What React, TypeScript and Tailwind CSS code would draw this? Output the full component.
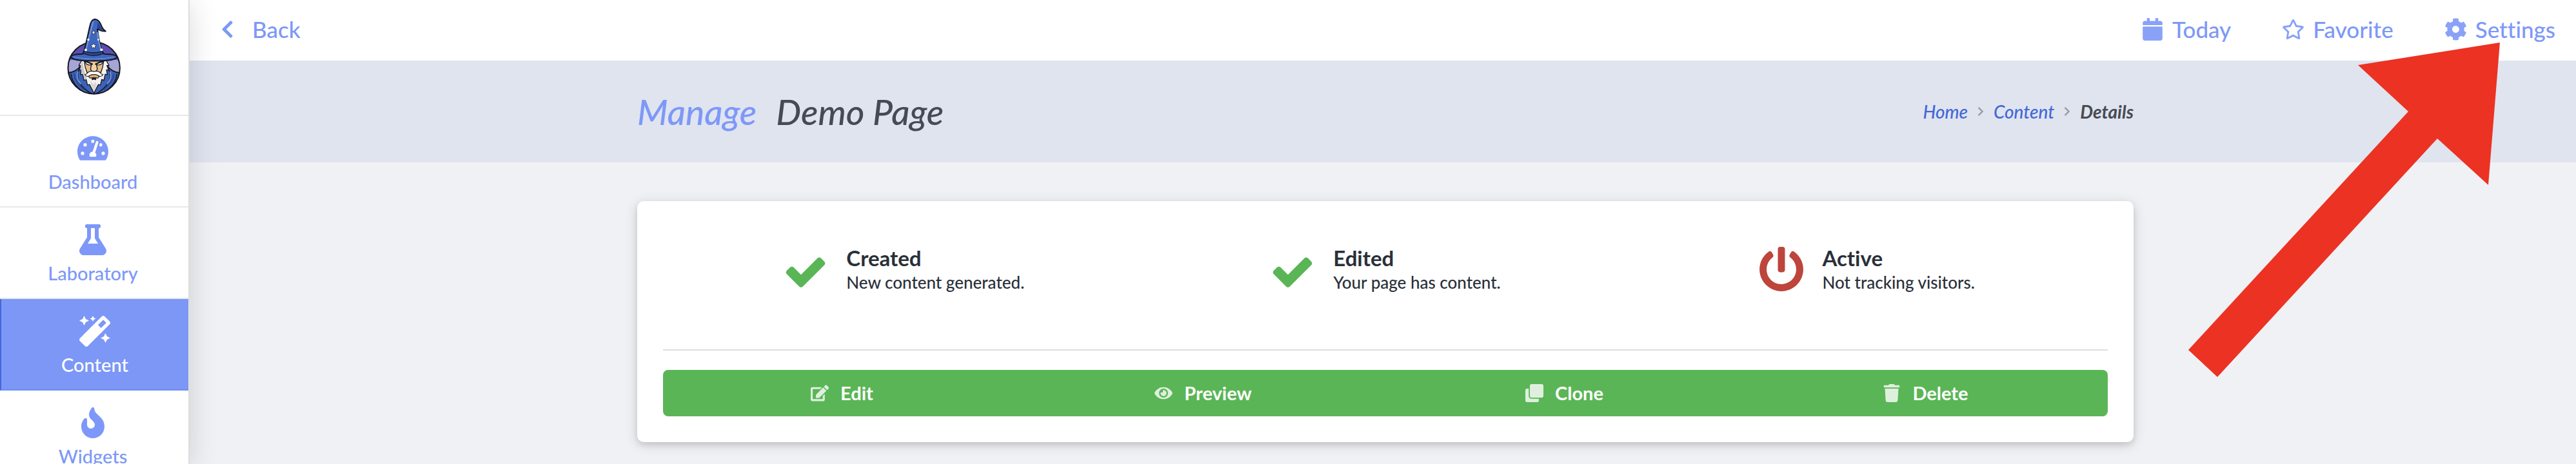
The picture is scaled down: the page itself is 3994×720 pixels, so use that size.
import type { ReactNode } from "react";
import type { IconType } from "react-icons";
import {
  FaCalendar,
  FaChevronLeft,
  FaChevronRight,
  FaClone,
  FaCog,
  FaEdit,
  FaEye,
  FaFire,
  FaFlask,
  FaMagic,
  FaPowerOff,
  FaRegStar,
  FaTachometerAlt,
  FaTrash,
} from "react-icons/fa";

function WizardLogo() {
  return (
    <svg viewBox="44 42 250 358" className="h-[120px] w-[84px]" role="img" aria-label="Wizard">
      <defs>
        <clipPath id="badge">
          <circle cx="168" cy="273" r="120" />
        </clipPath>
      </defs>
      <circle cx="168" cy="273" r="120" fill="#a5a5d6" />
      <g clipPath="url(#badge)">
        <path d="M40 140H300V236H40Z" fill="#5a4fae" />
        <path
          d="M40 296Q82 296 108 262L228 262Q254 296 296 296V400H40Z"
          fill="#3c62b8"
          stroke="#17181f"
          strokeWidth="6"
        />
        <path d="M104 274Q78 312 112 356Q136 384 164 394" fill="none" stroke="#17181f" strokeWidth="5" />
        <path d="M232 274Q258 312 224 356Q200 384 172 394" fill="none" stroke="#17181f" strokeWidth="5" />
        <path d="M94 290Q82 318 108 348M242 290Q254 318 228 348" fill="none" stroke="#7d9be0" strokeWidth="5" />
        <path d="M62 300Q66 350 122 386M274 300Q270 350 214 386" fill="none" stroke="#17181f" strokeWidth="5" />
        <path d="M76 300Q80 342 122 374M260 300Q256 342 214 374" fill="none" stroke="#2c4a97" strokeWidth="7" />
      </g>
      <circle cx="168" cy="273" r="120" fill="none" stroke="#17181f" strokeWidth="6" />
      <path
        d="M112 236L98 262L108 262L100 282L110 282L106 304L116 302L122 330L132 326L138 352L148 350L168 390L188 350L198 352L204 326L214 330L220 302L230 304L226 282L236 282L228 262L238 262L224 236Z"
        fill="#f4f2f0"
        stroke="#17181f"
        strokeWidth="4"
        strokeLinejoin="round"
      />
      <path d="M112 240L106 262L110 290L122 312L128 330L134 318L124 290L118 262Z" fill="#c9c6c4" />
      <path d="M150 332L156 354L168 384L180 354L176 334L168 350Z" fill="#d8d5d3" />
      <path d="M122 236H214L208 270L200 294H136L128 270Z" fill="#e9bd8a" stroke="#17181f" strokeWidth="4" />
      <path d="M158 250L154 284Q168 296 182 284L178 250Z" fill="#f3d0a2" />
      <path d="M156 258L152 280Q158 290 168 290Q178 290 184 280L180 258" fill="none" stroke="#17181f" strokeWidth="4" />
      <path d="M126 242L160 256Q144 264 132 254Z" fill="#fff" stroke="#17181f" strokeWidth="4" />
      <path d="M210 242L176 256Q192 264 204 254Z" fill="#fff" stroke="#17181f" strokeWidth="4" />
      <path d="M122 238L162 256M214 238L174 256" stroke="#17181f" strokeWidth="6" />
      <path
        d="M168 290Q148 284 136 298Q132 304 126 304Q132 316 146 310Q152 304 168 304Q184 304 190 310Q204 316 210 304Q204 304 200 298Q188 284 168 290Z"
        fill="#fff"
        stroke="#17181f"
        strokeWidth="3"
      />
      <path d="M144 314Q148 304 168 304Q188 304 192 314L186 320Q168 314 150 320Z" fill="#e2b07c" stroke="#17181f" strokeWidth="3" />
      <path d="M156 322Q168 316 180 322L176 330L168 326L160 330Z" fill="#17181f" />
      <path
        d="M60 222Q62 210 116 208L122 196Q134 150 148 84Q154 48 172 47Q190 48 200 72Q208 94 222 103Q206 104 184 92Q190 150 206 196L214 208Q272 210 276 222Q262 242 168 240Q74 242 60 222Z"
        fill="#3f66bf"
        stroke="#17181f"
        strokeWidth="6"
        strokeLinejoin="round"
      />
      <path d="M184 62Q184 82 186 92Q204 102 214 102Q198 88 192 70Z" fill="#26418c" />
      <path d="M118 206Q168 226 212 206L206 196Q168 210 122 196Z" fill="#2c4a97" stroke="#17181f" strokeWidth="4" />
      <path d="M164 60Q150 110 132 186" fill="none" stroke="#7593de" strokeWidth="6" strokeLinecap="round" />
      <path d="M184 110Q188 150 200 188" fill="none" stroke="#7593de" strokeWidth="6" strokeLinecap="round" />
      <path d="M74 222Q120 232 168 232Q216 232 262 222" fill="none" stroke="#6c8bd8" strokeWidth="4" />
      <path
        d="M166 158L170 166L179 167L173 173L174 182L166 178L158 182L159 173L153 167L162 166Z"
        fill="#fff"
        stroke="#17181f"
        strokeWidth="2"
      />
      <path
        d="M166 99L169 105L175 106L171 110L172 117L166 114L160 117L161 110L157 106L163 105Z"
        fill="#fff"
        stroke="#17181f"
        strokeWidth="2"
      />
      <circle cx="142" cy="142" r="5" fill="#fff" />
      <circle cx="188" cy="142" r="4" fill="#fff" />
      <circle cx="130" cy="190" r="6" fill="#fff" />
      <circle cx="203" cy="189" r="6" fill="#fff" />
    </svg>
  );
}

function CheckMark() {
  return (
    <svg viewBox="0 -88 1792 1792" className="size-[70px] text-[#5ab556]" fill="currentColor" aria-hidden="true">
      <path d="M1671 566q0 40-28 68l-724 724-136 136q-28 28-68 28t-68-28l-136-136-362-362q-28-28-28-68t28-68l136-136q28-28 68-28t68 28l294 295 656-657q28-28 68-28t68 28l136 136q28 28 28 68z" />
    </svg>
  );
}

const navItems: { label: string; icon: IconType; active?: boolean }[] = [
  { label: "Dashboard", icon: FaTachometerAlt },
  { label: "Laboratory", icon: FaFlask },
  { label: "Content", icon: FaMagic, active: true },
  { label: "Widgets", icon: FaFire },
];

const tools: { label: string; icon: IconType }[] = [
  { label: "Today", icon: FaCalendar },
  { label: "Favorite", icon: FaRegStar },
  { label: "Settings", icon: FaCog },
];

const steps: { title: string; text: string; icon: ReactNode }[] = [
  { title: "Created", text: "New content generated.", icon: <CheckMark /> },
  { title: "Edited", text: "Your page has content.", icon: <CheckMark /> },
  { title: "Active", text: "Not tracking visitors.", icon: <FaPowerOff className="size-[70px] text-[#bd453b]" /> },
];

const actions: { label: string; icon: IconType }[] = [
  { label: "Edit", icon: FaEdit },
  { label: "Preview", icon: FaEye },
  { label: "Clone", icon: FaClone },
  { label: "Delete", icon: FaTrash },
];

function Sidebar() {
  return (
    <nav className="relative z-10 w-[294px] shrink-0 border-r-2 border-[#dedede] bg-white text-[29px] leading-[35px] shadow-[0_4px_40px_rgba(34,36,58,0.17)]">
      <a href="#home" className="flex justify-center border-b-2 border-[#e8e8e9] pt-7 pb-[30px]">
        <WizardLogo />
      </a>
      {navItems.map(({ label, icon: Icon, active }) => (
        <a
          key={label}
          href={"#" + label.toLowerCase()}
          className={
            active
              ? "flex flex-col items-center gap-[10px] border-b-2 border-l-2 border-b-[#6f8df0] border-l-[#4468d8] bg-[#7c97f6] pt-[26px] pb-[21px] text-white"
              : "flex flex-col items-center gap-[10px] border-b-2 border-[#e8e8e9] pt-[26px] pr-1 pb-[21px] text-[#7d98f8]"
          }
        >
          <Icon className="h-12 w-auto" />
          {label}
        </a>
      ))}
    </nav>
  );
}

export default function App() {
  return (
    <div className="relative flex h-screen overflow-hidden bg-[#f0f1f4] font-['Lato',sans-serif] font-medium text-[#2a3039] [font-variant-ligatures:none]">
      <Sidebar />
      <div className="min-w-0 flex-1">
        <header className="flex items-center justify-between bg-white pt-6 pr-8 pb-7 pl-[38px] text-[35px] leading-[42px] text-[#7d98f8]">
          <a href="#back" className="flex items-center gap-[18px]">
            <span className="flex w-[41px] justify-center">
              <FaChevronLeft className="h-[31px] w-auto" />
            </span>
            Back
          </a>
          <div className="flex gap-[76px]">
            {tools.map(({ label, icon: Icon }) => (
              <button key={label} type="button" className="flex items-center gap-[10px]">
                <span className="flex w-[41px] justify-center opacity-90">
                  <Icon className="h-[35px] w-auto" />
                </span>
                {label}
              </button>
            ))}
          </div>
        </header>

        <main className="pl-2">
          <div className="-ml-2 bg-[#e0e4ef] pl-2">
            <div className="mx-auto flex h-[158px] max-w-[2320px] items-center justify-between italic">
              <h1 className="flex gap-[30px] text-[55px] leading-[64px] text-[#464b53]">
                <span className="text-[#7d98f8]">Manage</span>
                Demo Page
              </h1>
              <nav className="flex items-center gap-3 text-[28px] leading-[36px]">
                <a href="#home" className="text-[#4468d8]">Home</a>
                <FaChevronRight className="h-4 w-auto text-[#9b9fa8]" />
                <a href="#content" className="text-[#4468d8]">Content</a>
                <FaChevronRight className="h-4 w-auto text-[#9b9fa8]" />
                <span className="font-bold text-[#464b53]">Details</span>
              </nav>
            </div>
          </div>

          <section className="mx-auto mt-[60px] max-w-[2320px] rounded-[10px] bg-white px-10 pt-[68px] pb-10 shadow-[0_4px_8px_rgba(34,36,38,0.12),0_4px_20px_rgba(34,36,38,0.15)]">
            <ul className="grid grid-cols-3">
              {steps.map(({ title, text, icon }) => (
                <li key={title} className="flex items-center justify-center gap-7">
                  {icon}
                  <div>
                    <h2 className="text-[33px] leading-[40px] font-bold">{title}</h2>
                    <p className="text-[26px] leading-[36px]">{text}</p>
                  </div>
                </li>
              ))}
            </ul>
            <div className="mt-[86px] mb-[30px] border-t-2 border-[#dededf]" />
            <div className="grid grid-cols-4 overflow-hidden rounded-lg bg-[#5ab556] text-[29px] leading-[36px] font-bold text-white">
              {actions.map(({ label, icon: Icon }) => (
                <button key={label} type="button" className="flex items-center justify-center gap-4 py-[18px] pr-2">
                  <span className="flex w-[33px] justify-center opacity-80">
                    <Icon className="h-7 w-auto" />
                  </span>
                  {label}
                </button>
              ))}
            </div>
          </section>
        </main>
      </div>

      <svg
        viewBox="0 0 484 522"
        className="pointer-events-none absolute top-[65px] right-[117px] z-20 h-[522px] w-[484px]"
        aria-hidden="true"
      >
        <path d="M483 1L263 36L341 108L0 478L45 520L386 150L465 222Z" fill="#ec3223" />
      </svg>
    </div>
  );
}
